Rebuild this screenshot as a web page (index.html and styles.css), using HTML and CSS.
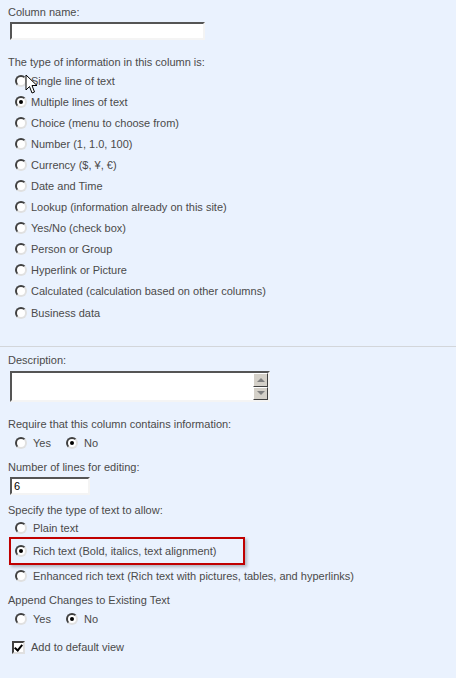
FILE: index.html
```html
<!DOCTYPE html>
<html lang="en">
<head>
    <meta charset="UTF-8">
    <title>Create Column</title>
    <link rel="stylesheet" href="styles.css">
</head>
<body>
    <div class="section name-section">
        <div class="label">Column name:</div>
        <div class="textbox name-box"></div>
        <div class="label type-label">The type of information in this column is:</div>
        <div class="options">
            <div class="opt"><span class="radio"></span>Single line of text</div>
            <div class="opt"><span class="radio checked"></span>Multiple lines of text</div>
            <div class="opt"><span class="radio"></span>Choice (menu to choose from)</div>
            <div class="opt"><span class="radio"></span>Number (1, 1.0, 100)</div>
            <div class="opt"><span class="radio"></span>Currency ($, ¥, €)</div>
            <div class="opt"><span class="radio"></span>Date and Time</div>
            <div class="opt"><span class="radio"></span>Lookup (information already on this site)</div>
            <div class="opt"><span class="radio"></span>Yes/No (check box)</div>
            <div class="opt"><span class="radio"></span>Person or Group</div>
            <div class="opt"><span class="radio"></span>Hyperlink or Picture</div>
            <div class="opt"><span class="radio"></span>Calculated (calculation based on other columns)</div>
            <div class="opt last"><span class="radio"></span>Business data</div>
        </div>
        <svg class="cursor" width="13" height="21" viewBox="0 0 13 21">
            <path d="M1 1 L1 16 L4.5 12.5 L7 19 L9.5 18 L7 11.5 L12 11.5 Z" fill="#fff" stroke="#000" stroke-width="1"/>
        </svg>
    </div>

    <div class="section settings">
        <div class="label">Description:</div>
        <div class="textbox desc-box">
            <div class="scroll">
                <span class="arrow up"></span>
                <span class="arrow down"></span>
            </div>
        </div>

        <div class="label">Require that this column contains information:</div>
        <div class="inline-opts require-opts">
            <div class="opt"><span class="radio"></span>Yes</div>
            <div class="opt"><span class="radio checked"></span>No</div>
        </div>

        <div class="label">Number of lines for editing:</div>
        <div class="textbox lines-box">6</div>

        <div class="label">Specify the type of text to allow:</div>
        <div class="opt small plain"><span class="radio"></span>Plain text</div>
        <div class="highlight">
            <div class="opt small"><span class="radio checked"></span>Rich text (Bold, italics, text alignment)</div>
        </div>
        <div class="opt small enhanced"><span class="radio"></span>Enhanced rich text (Rich text with pictures, tables, and hyperlinks)</div>

        <div class="label append-label">Append Changes to Existing Text</div>
        <div class="inline-opts">
            <div class="opt"><span class="radio"></span>Yes</div>
            <div class="opt"><span class="radio checked"></span>No</div>
        </div>

        <div class="check-row"><span class="checkbox"></span>Add to default view</div>
    </div>
</body>
</html>
```

FILE: styles.css
```css
body {
    margin: 0;
    background-color: #eaf2fe;
    font-family: "Liberation Sans", Arial, sans-serif;
    font-size: 11px;
    color: #4a4a4a;
    height: 678px;
    overflow: hidden;
}
.section {
    padding: 0 8px;
}
.name-section {
    position: relative;
    padding-top: 5px;
    height: 341px;
    border-bottom: 1px solid #d3d6da;
}
.label {
    line-height: 14px;
}
.textbox {
    background: #fff;
    border: 2px solid;
    border-color: #555 #f4f4f4 #f4f4f4 #555;
    box-sizing: border-box;
    margin-left: 2px;
}
.name-box {
    width: 195px;
    height: 18px;
    margin-top: 3px;
}
.type-label {
    margin-top: 15px;
}
.options {
    padding-left: 7px;
    margin-top: 1px;
}
.opt {
    display: flex;
    align-items: center;
    height: 21px;
}
.options .last {
    margin-top: 1px;
}
.radio {
    width: 12px;
    height: 12px;
    box-sizing: border-box;
    border-radius: 50%;
    border: 2px solid;
    border-color: #404040 #e0e0e0 #e0e0e0 #404040;
    background: #fff;
    margin-right: 4px;
    display: flex;
    align-items: center;
    justify-content: center;
}
.radio.checked::after {
    content: "";
    width: 4px;
    height: 4px;
    border-radius: 50%;
    background: #000;
}
.cursor {
    position: absolute;
    left: 25px;
    top: 74px;
}
.settings {
    padding-top: 6px;
}
.desc-box {
    width: 260px;
    height: 31px;
    margin-top: 4px;
    margin-bottom: 15px;
    display: flex;
    justify-content: flex-end;
}
.scroll {
    width: 15px;
    display: flex;
    flex-direction: column;
}
.arrow {
    flex: 1;
    background: #d4d0c8;
    border: 1px solid;
    border-color: #fff #404040 #404040 #fff;
    display: flex;
    align-items: center;
    justify-content: center;
}
.arrow::after {
    content: "";
    border-left: 4px solid transparent;
    border-right: 4px solid transparent;
}
.arrow.up::after {
    border-bottom: 4px solid #808080;
}
.arrow.down::after {
    border-top: 4px solid #808080;
}
.inline-opts {
    display: flex;
    gap: 15px;
    padding-left: 7px;
    height: 22px;
    align-items: center;
    margin-top: 1px;
    margin-bottom: 2px;
}
.inline-opts .radio {
    margin-right: 6px;
}
.require-opts {
    margin-bottom: 6px;
}
.lines-box {
    width: 80px;
    height: 18px;
    margin-top: 3px;
    margin-bottom: 8px;
    padding-left: 2px;
    line-height: 14px;
    color: #000;
}
.opt.small {
    padding-left: 7px;
    height: 20px;
}
.opt.small .radio {
    margin-right: 6px;
}
.opt.plain {
    margin-top: 1px;
}
.opt.enhanced {
    margin-top: 1px;
}
.highlight {
    margin: -1px 0 0 1px;
    width: 236px;
    height: 28px;
    box-sizing: border-box;
    border: 2px solid #c00000;
    box-shadow: 2px 2px 3px rgba(0, 0, 0, 0.25);
    display: flex;
    align-items: center;
}
.highlight .opt.small {
    padding-left: 4px;
}
.append-label {
    margin-top: 7px;
}
.check-row {
    display: flex;
    align-items: center;
    margin-top: 7px;
    padding-left: 4px;
    height: 20px;
}
.checkbox {
    width: 13px;
    height: 13px;
    box-sizing: border-box;
    border: 2px solid;
    border-color: #404040 #e0e0e0 #e0e0e0 #404040;
    background: #fff;
    margin-right: 6px;
    position: relative;
}
.checkbox::after {
    content: "";
    position: absolute;
    left: 2px;
    top: 0;
    width: 3px;
    height: 6px;
    border: solid #000;
    border-width: 0 2px 2px 0;
    transform: rotate(40deg);
}
```
